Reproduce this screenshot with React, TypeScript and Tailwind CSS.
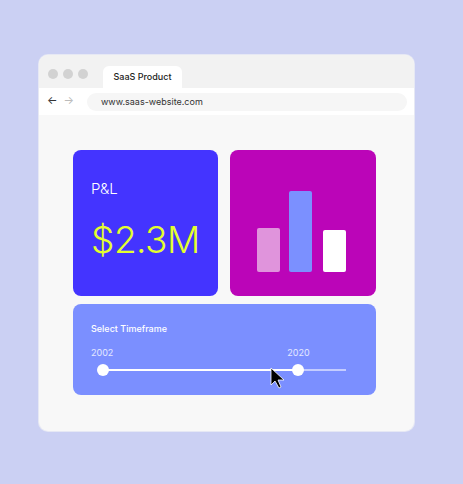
import React from "react";

const App: React.FC = () => {
  return (
    <div
      className="w-[463px] h-[484px] bg-[#cbd0f3] pt-[55px] pl-[39px]"
      style={{ fontFamily: "Inter, 'Liberation Sans', sans-serif" }}
    >
      <div className="w-[375px] h-[376px] rounded-[9px] bg-[#f8f8f8] overflow-hidden flex flex-col shadow-[0_0_0_1px_#e6e8f4]">
        {/* Tab bar */}
        <div className="h-[33px] bg-[#f2f2f2] flex items-end pl-[9px]">
          <div className="flex gap-[5px] self-center mt-[4px]">
            <span className="w-[10px] h-[10px] rounded-full bg-[#d2d2d2]" />
            <span className="w-[10px] h-[10px] rounded-full bg-[#d2d2d2]" />
            <span className="w-[10px] h-[10px] rounded-full bg-[#d2d2d2]" />
          </div>
          <div className="ml-[15px] w-[79px] h-[22px] bg-white rounded-t-[6px] flex items-center justify-center text-[9px] font-medium text-[#222]">
            SaaS Product
          </div>
        </div>
        {/* Address bar */}
        <div className="h-[27px] bg-white flex items-center pl-[8px] pr-[7px]">
          <span className="text-[11px] leading-none text-[#333] mb-[2px]">←</span>
          <span className="ml-[6px] text-[11px] leading-none text-[#bbb] mb-[2px]">→</span>
          <div className="ml-[13px] flex-1 h-[18px] rounded-full bg-[#f6f6f6] flex items-center pl-[14px] text-[9px] text-[#333]">
            www.saas-website.com
          </div>
        </div>
        {/* Content */}
        <div className="flex-1 pt-[35px] pl-[34px] flex flex-col gap-[8px]">
          <div className="flex gap-[12px]">
            <div className="w-[145px] h-[146px] rounded-[8px] bg-[#4434ff] pl-[18px] pt-[31px]">
              <div className="text-[15px] leading-none text-white font-light">P&amp;L</div>
              <div className="mt-[25px] text-[37px] leading-none text-[#e4ff2e] font-light tracking-[-0.5px]">
                $2.3M
              </div>
            </div>
            <div className="w-[146px] h-[146px] rounded-[8px] bg-[#bb05b8] flex items-end pl-[27px] pb-[24px]">
              <div className="w-[23px] h-[44px] rounded-[2px] bg-[#e094dc]" />
              <div className="ml-[9px] w-[23px] h-[81px] rounded-[2px] bg-[#7b90ff]" />
              <div className="ml-[11px] w-[23px] h-[42px] rounded-[2px] bg-white" />
            </div>
          </div>
          <div className="w-[303px] h-[91px] rounded-[8px] bg-[#7b8fff] pl-[18px] pr-[30px] pt-[20px] relative">
            <div className="text-[9px] leading-none font-medium text-white">Select Timeframe</div>
            <div className="mt-[15px] flex text-[9px] leading-none text-white/80">
              <span>2002</span>
              <span className="ml-[174px]">2020</span>
            </div>
            <div className="mt-[7px] relative h-[12px] ml-[12px]">
              <div className="absolute left-0 top-[5px] w-[243px] h-[2px] bg-[#c4ccff]" />
              <div className="absolute left-0 top-[5px] w-[195px] h-[2px] bg-white" />
              <div className="absolute left-[-6px] top-0 w-[12px] h-[12px] rounded-full bg-white" />
              <div className="absolute left-[189px] top-0 w-[12px] h-[12px] rounded-full bg-white" />
            </div>
            <svg
              className="absolute left-[197px] top-[63px]"
              width="16"
              height="22"
              viewBox="0 0 16 22"
            >
              <path d="M1 1 L1 18 L5 14 L9 21 L11 20 L8 13 L14 13 Z" fill="#000" stroke="#fff" strokeWidth="0.8" />
            </svg>
          </div>
        </div>
      </div>
    </div>
  );
};

export default App;
